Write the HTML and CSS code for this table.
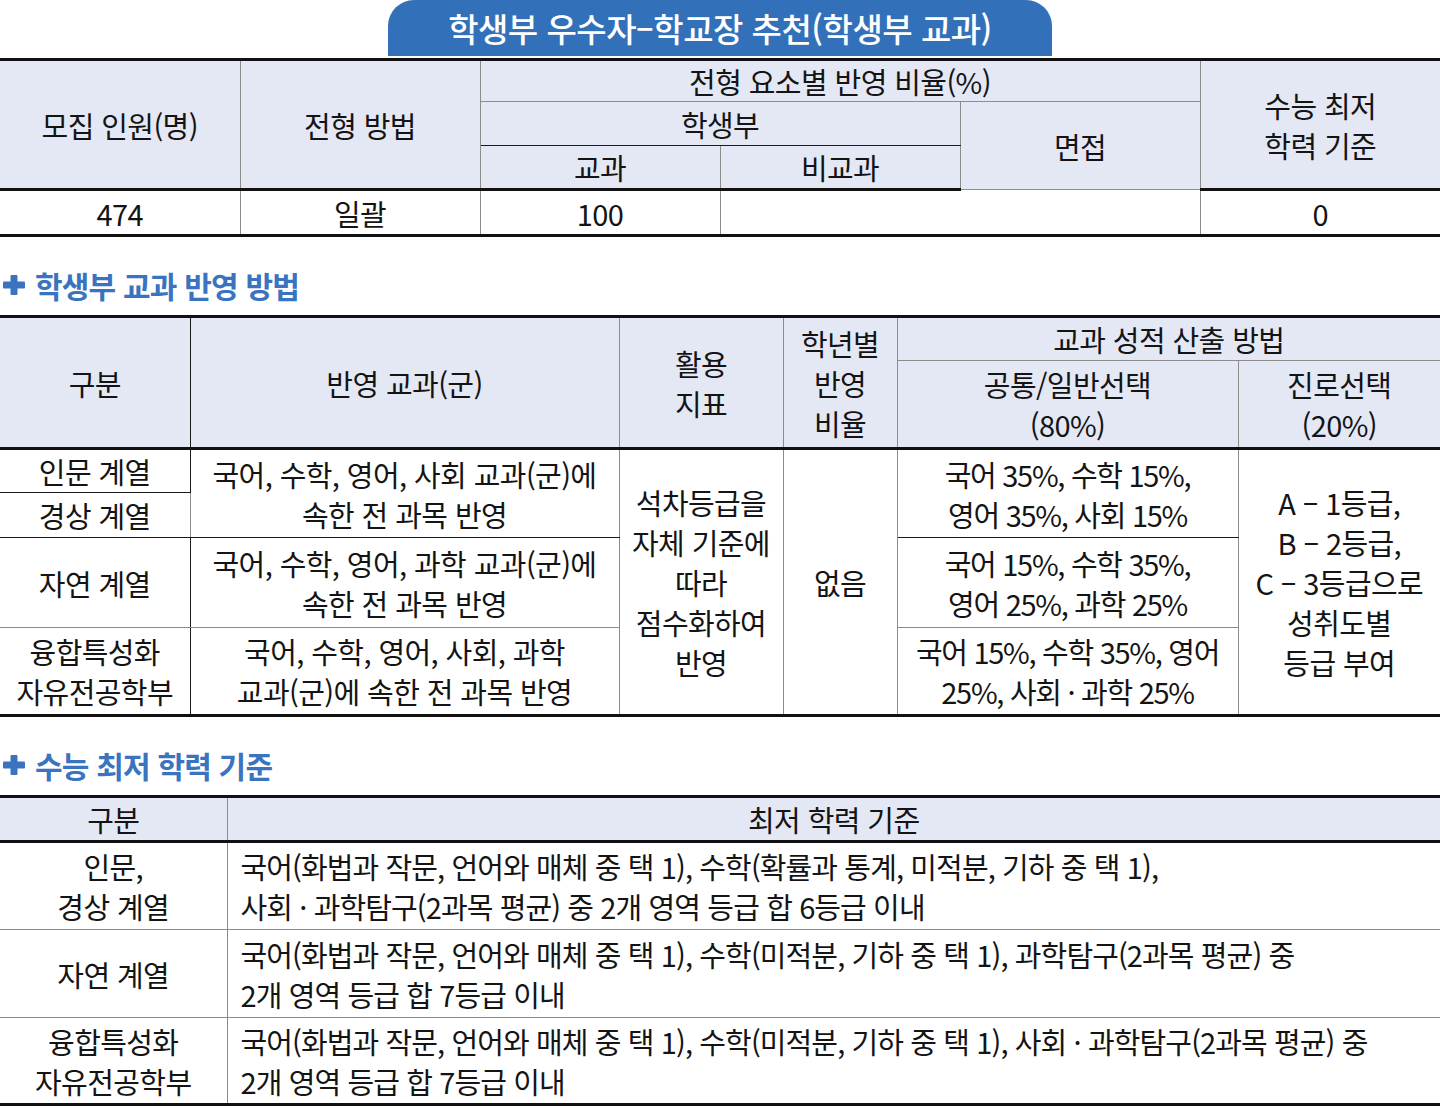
FILE: index.html
```html
<!DOCTYPE html>
<html lang="ko">
<head>
<meta charset="utf-8">
<title>학생부 우수자-학교장 추천</title>
<link rel="stylesheet" href="styles.css">
</head>
<body>
<div class="page">
  <div class="tab-wrap">
    <div class="tab">학생부 우수자–학교장 추천(학생부 교과)</div>
  </div>

  <table class="tbl t1">
    <colgroup>
      <col class="c240"><col class="c240"><col class="c240"><col class="c240"><col class="c240"><col class="c240">
    </colgroup>
    <thead>
      <tr class="h42">
        <th rowspan="3">모집 인원(명)</th>
        <th rowspan="3">전형 방법</th>
        <th colspan="3" class="bb-gray">전형 요소별 반영 비율(%)</th>
        <th rowspan="3" class="two">수능 최저<br>학력 기준</th>
      </tr>
      <tr class="h44">
        <th colspan="2" class="bb-dark">학생부</th>
        <th rowspan="2">면접</th>
      </tr>
      <tr class="h44 last">
        <th>교과</th>
        <th>비교과</th>
      </tr>
    </thead>
    <tbody>
      <tr class="h46">
        <td>474</td>
        <td>일괄</td>
        <td>100</td>
        <td colspan="2"></td>
        <td>0</td>
      </tr>
    </tbody>
  </table>

  <h2 class="sec"><svg class="plus" viewBox="0 0 22 20" width="22" height="20" aria-hidden="true"><rect x="7.5" y="0" width="7" height="20" rx="1" fill="#3a74c0"/><rect x="0" y="6.5" width="22" height="7" rx="1" fill="#3a74c0"/></svg>학생부 교과 반영 방법</h2>

  <table class="tbl t2">
    <colgroup>
      <col style="width:190px"><col style="width:429px"><col style="width:164px"><col style="width:114px"><col style="width:341px"><col style="width:202px">
    </colgroup>
    <thead>
      <tr class="h44">
        <th rowspan="2" class="br-dark">구분</th>
        <th rowspan="2">반영 교과(군)</th>
        <th rowspan="2" class="lh44">활용<br>지표</th>
        <th rowspan="2" class="lh44 nudge">학년별<br>반영<br>비율</th>
        <th colspan="2" class="bb-gray">교과 성적 산출 방법</th>
      </tr>
      <tr class="h88 last">
        <th class="lh46">공통/일반선택<br>(80%)</th>
        <th class="lh46">진로선택<br>(20%)</th>
      </tr>
    </thead>
    <tbody>
      <tr class="h44">
        <td class="br-dark bb-dark">인문 계열</td>
        <td rowspan="2" class="lh40 bb-dark">국어, 수학, 영어, 사회 교과(군)에<br>속한 전 과목 반영</td>
        <td rowspan="4" class="lh40">석차등급을<br>자체 기준에<br>따라<br>점수화하여<br>반영</td>
        <td rowspan="4">없음</td>
        <td rowspan="2" class="lh40 bb-dark num">국어 35%, 수학 15%,<br>영어 35%, 사회 15%</td>
        <td rowspan="4" class="lh40">A – 1등급,<br>B – 2등급,<br>C – 3등급으로<br>성취도별<br>등급 부여</td>
      </tr>
      <tr class="h45">
        <td class="br-dark bb-dark">경상 계열</td>
      </tr>
      <tr class="h90">
        <td class="br-dark">자연 계열</td>
        <td class="lh40">국어, 수학, 영어, 과학 교과(군)에<br>속한 전 과목 반영</td>
        <td class="lh40 num">국어 15%, 수학 35%,<br>영어 25%, 과학 25%</td>
      </tr>
      <tr class="h88">
        <td class="br-dark lh38">융합특성화<br>자유전공학부</td>
        <td class="lh40">국어, 수학, 영어, 사회, 과학<br>교과(군)에 속한 전 과목 반영</td>
        <td class="lh40 num">국어 15%, 수학 35%, 영어<br>25%, 사회 · 과학 25%</td>
      </tr>
    </tbody>
  </table>

  <h2 class="sec"><svg class="plus" viewBox="0 0 22 20" width="22" height="20" aria-hidden="true"><rect x="7.5" y="0" width="7" height="20" rx="1" fill="#3a74c0"/><rect x="0" y="6.5" width="22" height="7" rx="1" fill="#3a74c0"/></svg>수능 최저 학력 기준</h2>

  <table class="tbl t3">
    <colgroup>
      <col style="width:227px"><col style="width:1213px">
    </colgroup>
    <thead>
      <tr class="h45 last">
        <th>구분</th>
        <th>최저 학력 기준</th>
      </tr>
    </thead>
    <tbody>
      <tr class="h88">
        <td class="lh41">인문,<br>경상 계열</td>
        <td class="left lh41">국어(화법과 작문, 언어와 매체 중 택 1), 수학(확률과 통계, 미적분, 기하 중 택 1),<br>사회 · 과학탐구(2과목 평균) 중 2개 영역 등급 합 6등급 이내</td>
      </tr>
      <tr class="h88">
        <td>자연 계열</td>
        <td class="left lh41">국어(화법과 작문, 언어와 매체 중 택 1), 수학(미적분, 기하 중 택 1), 과학탐구(2과목 평균) 중<br>2개 영역 등급 합 7등급 이내</td>
      </tr>
      <tr class="h87">
        <td class="lh41">융합특성화<br>자유전공학부</td>
        <td class="left lh41">국어(화법과 작문, 언어와 매체 중 택 1), 수학(미적분, 기하 중 택 1), 사회 · 과학탐구(2과목 평균) 중<br>2개 영역 등급 합 7등급 이내</td>
      </tr>
    </tbody>
  </table>
</div>
</body>
</html>
```

FILE: styles.css
```css
* { box-sizing: border-box; }

html, body {
  margin: 0;
  padding: 0;
  background: #ffffff;
}

body {
  font-family: "Noto Sans CJK KR", "Noto Sans", sans-serif;
  color: #141414;
  width: 1440px;
}

.page {
  width: 1440px;
}

.tab-wrap {
  display: flex;
  justify-content: center;
  height: 58px;
}

.tab {
  width: 664px;
  height: 56px;
  background: #3271ba;
  color: #ffffff;
  border-radius: 26px 26px 0 0;
  font-size: 33px;
  line-height: 56px;
  text-align: center;
  letter-spacing: -0.5px;
  font-weight: 500;
}

.tbl {
  width: 1440px;
  border-collapse: collapse;
  table-layout: fixed;
  border-top: 3px solid #111;
  border-bottom: 3px solid #111;
}

.tbl th,
.tbl td {
  padding: 0;
  text-align: center;
  vertical-align: middle;
  font-size: 29px;
  font-weight: 400;
  letter-spacing: -0.6px;
  border: 1px solid #8c8c8c;
  line-height: 40px;
}

.tbl th:first-child,
.tbl td:first-child {
  border-left: none;
}

.tbl th:last-child,
.tbl td:last-child {
  border-right: none;
}

.tbl thead th {
  background: #e4e8f4;
}

.tbl thead tr.last th,
.tbl thead th[rowspan="3"],
.t2 thead th[rowspan="2"] {
  border-bottom: 3px solid #111;
}

.c240 { width: 240px; }

.h42 { height: 42px; }
.h44 { height: 44px; }
.h45 { height: 45px; }
.h46 { height: 46px; }
.h87 { height: 87px; }
.h88 { height: 88px; }
.h90 { height: 90px; }

.lh38 { line-height: 38px; }
.lh40 { line-height: 40px; }
.lh41 { line-height: 41px; }
.lh44 { line-height: 44px; }
.lh46 { line-height: 46px; }

.two { line-height: 44px; }

.nudge { padding-top: 2px; }

.bb-gray { border-bottom-color: #8c8c8c; }

.tbl .bb-dark { border-bottom: 1px solid #1a1a1a; }
.tbl .br-dark { border-right: 1px solid #1a1a1a; }

.tbl td.num {
  letter-spacing: -1.3px;
}

.tbl td.left {
  text-align: left;
  padding-left: 13px;
  letter-spacing: -0.9px;
}

.sec {
  display: flex;
  align-items: center;
  gap: 10px;
  height: 40px;
  margin: 28px 0 10px 0;
  padding-left: 3px;
  font-size: 30px;
  font-weight: 700;
  color: #3a74c0;
  letter-spacing: -0.8px;
}

.plus {
  flex: none;
}
```
